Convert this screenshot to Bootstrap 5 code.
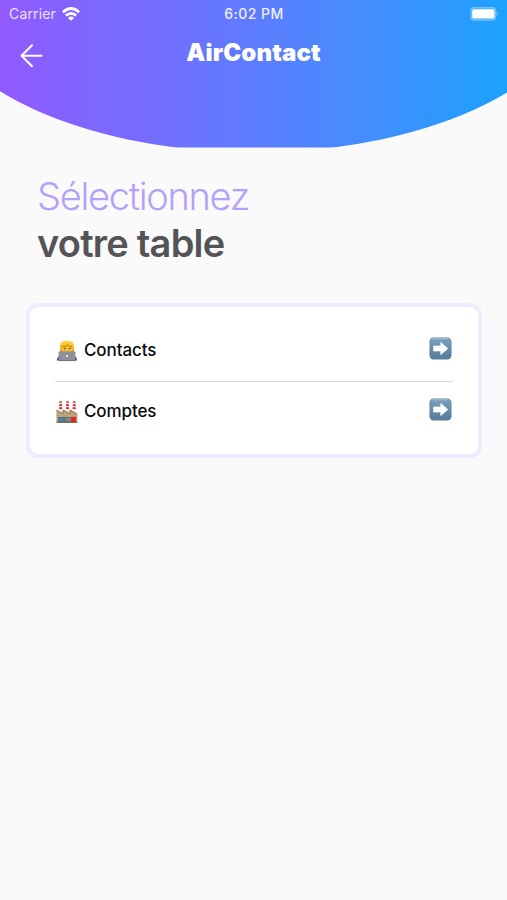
<!DOCTYPE html>
<html lang="fr">
<head>
<meta charset="utf-8">
<meta name="viewport" content="width=device-width, initial-scale=1">
<title>AirContact</title>
<link href="https://cdn.jsdelivr.net/npm/bootstrap@5.3.0/dist/css/bootstrap.min.css" rel="stylesheet">
<style>
body{background:#fafafb;font-family:Inter,"Liberation Sans",sans-serif;min-height:900px}
svg{display:block}
.hero{height:148px}
.hero-bg{position:absolute;inset:0}
.status{height:27px;font-size:14px;line-height:27px;padding:0 8px 0 9px}
.status-side{flex:1 1 0}
.carrier{letter-spacing:.15px;color:#e9e2ff}
.clock{font-weight:500;letter-spacing:.5px;color:#f0eeff}
.wifi{margin-left:6px}
.bar{height:52px;padding:0 20px}
.back{padding-top:17px}
.bar-title{font-size:24px;font-weight:900;line-height:52px;letter-spacing:.15px;color:#fff}
.heading{padding:25px 37px 0;font-size:38px;line-height:47px}
.heading-top{font-weight:300;color:#b3a0fa;letter-spacing:-1.3px}
.heading-bottom{font-weight:600;color:#545456;letter-spacing:-.78px}
.panel{margin:36px 25px 0 26px;border:4px solid #efecff;border-radius:12px;padding:13px 25px 12px}
.entry{height:61px;font-size:17px;font-weight:500;color:#0b0b0c;letter-spacing:-.1px}
.entry + .entry{border-top:1px solid #dcdcdf}
.entry-icon{margin:0 6px 0 1px}
.entry-go{margin-right:1px;margin-bottom:5px}
</style>
<script src="https://cdn.jsdelivr.net/npm/bootstrap@5.3.0/dist/js/bootstrap.bundle.min.js"></script>
</head>
<body>
<svg width="0" height="0" class="position-absolute" aria-hidden="true">
  <defs>
    <linearGradient id="tile" x1="0" y1="0" x2="0" y2="1"><stop offset="0" stop-color="#7da0bb"/><stop offset="1" stop-color="#557b9b"/></linearGradient>
    <linearGradient id="hair" x1="0" y1="0" x2="0" y2="1"><stop offset="0" stop-color="#ffd83c"/><stop offset="1" stop-color="#ee9d20"/></linearGradient>
    <symbol id="go" viewBox="0 0 23 23">
      <rect x=".5" y=".5" width="22" height="22" rx="4.200" fill="#5c7e9a"/>
      <rect x="1.200" y="1.100" width="20.600" height="20.400" rx="3.600" fill="url(#tile)"/>
      <path d="M4 1.800h15" stroke="#a9c3d5" stroke-width=".9" stroke-linecap="round"/>
      <path d="M4.600 9h7.200V5.400l7 6.100-7 6.100V14H4.600z" fill="#fff" stroke="#fff" stroke-width=".7" stroke-linejoin="round"/>
    </symbol>
  </defs>
</svg>

<header class="hero position-relative">
  <svg class="hero-bg" width="507" height="148" viewBox="0 0 507 148" aria-hidden="true">
    <defs>
      <linearGradient id="sky" gradientUnits="userSpaceOnUse" x1="0" y1="0" x2="507" y2="0"><stop offset="0" stop-color="#915aff"/><stop offset=".34" stop-color="#6f70ff"/><stop offset=".67" stop-color="#4b89ff"/><stop offset="1" stop-color="#1ca1ff"/></linearGradient>
      <clipPath id="visible"><rect width="507" height="147.500"/></clipPath>
    </defs>
    <g clip-path="url(#visible)"><ellipse cx="254.500" cy="-17.500" rx="331" ry="170" fill="url(#sky)"/></g>
  </svg>
  <div class="position-relative">
    <div class="status d-flex align-items-center">
      <div class="status-side d-flex align-items-center">
        <span class="carrier">Carrier</span>
        <svg class="wifi" width="18" height="14" viewBox="0 0 18 14" fill="none" stroke="#fff" stroke-width="2.700" aria-hidden="true"><path d="M.9 5.200Q9-2.200 17.100 5.200M3.900 8.600Q9 4 14.100 8.600"/><path d="M6 10.900Q9 8.300 12 10.900L9 13.800z" fill="#fff" stroke="none"/></svg>
      </div>
      <span class="clock">6:02 PM</span>
      <div class="status-side d-flex justify-content-end">
        <svg width="29" height="14" viewBox="0 0 29 14" aria-hidden="true"><rect x=".8" y=".6" width="25" height="12.600" rx="3.500" fill="#ffffff" fill-opacity=".15" stroke="#fff" stroke-opacity=".35" stroke-width="1.200"/><rect x="2.200" y="2.300" width="22.300" height="9.200" rx="1.600" fill="#fff"/><path d="M27 4.600q2.200 2.200 0 4.400z" fill="#fff" fill-opacity=".45"/></svg>
      </div>
    </div>
    <div class="bar d-flex">
      <div class="status-side back">
        <svg width="23" height="23" viewBox="0 0 23 23" fill="none" stroke="#fff" stroke-width="2" stroke-linecap="round" stroke-linejoin="round" aria-label="Retour"><path d="M12 1.200 1.500 11.800 12 22.200M1.500 11.800H21.500"/></svg>
      </div>
      <div class="bar-title">AirContact</div>
      <div class="status-side"></div>
    </div>
  </div>
</header>

<main>
  <h1 class="heading mb-0"><span class="heading-top d-block">Sélectionnez</span><span class="heading-bottom d-block">votre table</span></h1>
  <div class="panel bg-white">
    <div class="entry d-flex align-items-center">
      <svg width="22" height="22" viewBox="0 0 22 22" class="entry-icon" aria-hidden="true">
        <path d="M.8 20.600Q1.200 16 5 15.200h12q3.800.8 4 5.400z" fill="#363bb6"/>
        <path d="M4 12V6Q4 .8 11 .8T18 6v6z" fill="url(#hair)"/>
        <path d="M6.300 6.400Q10 7 11.500 4.800 13 6.800 15.900 6.700V10q-.5 3.500-4.500 3.500T6.300 10z" fill="#f8bd31"/>
        <path d="M6.200 6.600Q10 7 11.500 4.900 13 6.800 16 6.700" stroke="#b76c20" stroke-width=".8" fill="none"/>
        <circle cx="8.800" cy="8.500" r=".8" fill="#68401a"/><circle cx="13.700" cy="8.500" r=".8" fill="#68401a"/>
        <rect x="2.600" y="11.300" width="16.800" height="9.300" rx="1" fill="#8e9095"/><path d="M3 20h16.200v1.100H3z" fill="#74767c"/><circle cx="11.100" cy="16" r="1.100" fill="#eee"/>
      </svg>
      <span>Contacts</span>
      <svg class="ms-auto entry-go" width="23" height="23" aria-hidden="true"><use href="#go"/></svg>
    </div>
    <div class="entry d-flex align-items-center">
      <svg width="22" height="22" viewBox="0 0 22 22" class="entry-icon" aria-hidden="true">
        <path d="M3 8 3.500 0h2.200L6.200 10zM10 8 10.400 0h2.200L13.200 10zM16.600 8 17.100 0h2.200L19.800 10z" fill="#f4d9d5"/>
        <path d="M3.400 1h2.400M3.200 4.200H6M10.300 1h2.400M10.100 4.200H13M17 1h2.400M16.800 4.200h2.900M3 7.200h3.200M9.900 7.200h3.300M16.600 7.200h3.200" stroke="#db333b" stroke-width="1.700"/>
        <path d="M.4 21.500V9L7 12.500V9l7 3.500V9l7.400 4v8.500z" fill="#bda27a"/>
        <path d="M.4 9 7 12.500V9l7 3.500V9l7.400 4" stroke="#856a4b" stroke-width=".9" fill="none"/>
        <rect x="2" y="16" width="12.500" height="5.400" fill="#59676b"/><path d="M2.500 17h5v3.200h-5z" fill="#4b89a9"/><path d="M8.700 17H14v3.200H8.700z" fill="#7e8982"/>
        <rect x="15" y="15.800" width="5.200" height="5.600" fill="#d92e2b"/><path d="M.4 21.300h21" stroke="#665641" stroke-width=".8"/>
      </svg>
      <span>Comptes</span>
      <svg class="ms-auto entry-go" width="23" height="23" aria-hidden="true"><use href="#go"/></svg>
    </div>
  </div>
</main>
</body>
</html>
